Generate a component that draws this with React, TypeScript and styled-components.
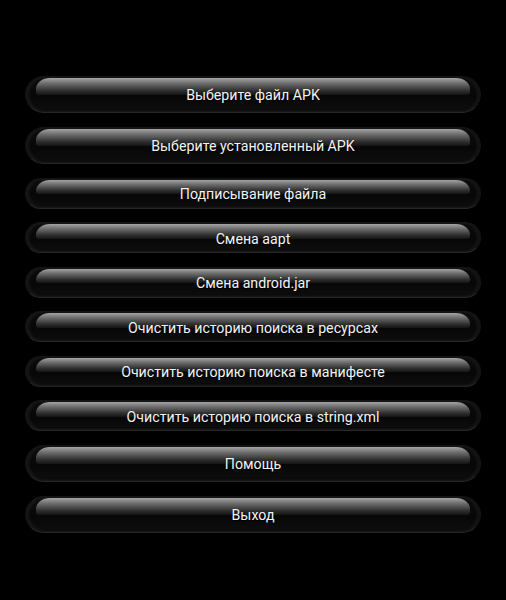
import React from 'react';
import styled, { createGlobalStyle } from 'styled-components';

const GlobalStyle = createGlobalStyle`
  html, body {
    margin: 0;
    padding: 0;
    background: #000;
  }
  body {
    font-family: Roboto, "Noto Sans", "Liberation Sans", sans-serif;
  }
`;

const Screen = styled.div`
  width: 506px;
  height: 600px;
  background: #000;
  box-sizing: border-box;
  padding: 75.5px 25px 0 25px;
`;

const Menu = styled.div`
  display: flex;
  flex-direction: column;
  gap: 13.5px;
`;

const MenuButton = styled.button<{ $size: 'large' | 'small' }>`
  position: relative;
  display: flex;
  align-items: center;
  justify-content: center;
  width: 100%;
  height: ${(p) => (p.$size === 'large' ? '37.5px' : '31px')};
  padding: 0 12px;
  box-sizing: border-box;
  border: 1px solid #141414;
  border-bottom-color: #262626;
  border-radius: 999px;
  background: linear-gradient(to bottom, #0d0d0d 0%, #070707 55%, #0e0e0e 100%);
  box-shadow: inset 3px 0 3px rgba(60, 60, 60, 0.3), inset -3px 0 3px rgba(60, 60, 60, 0.25);
  color: #f4f4f4;
  font-family: Roboto, "Noto Sans", "Liberation Sans", sans-serif;
  font-size: 14.2px;
  text-shadow: 0 1px 1px #000;
  cursor: pointer;
  overflow: hidden;

  &::before {
    content: '';
    position: absolute;
    left: 10px;
    right: 10px;
    top: 1px;
    height: 50%;
    border-radius: 14px 14px 3px 3px / 11px 11px 3px 3px;
    background: linear-gradient(to bottom, #a4a4a4 0%, #707070 30%, #2e2e2e 75%, #141414 100%);
  }
`;

const Label = styled.span`
  position: relative;
  padding-top: 2px;
`;

const items: { label: string; size: 'large' | 'small' }[] = [
  { label: 'Выберите файл APK', size: 'large' },
  { label: 'Выберите установленный APK', size: 'large' },
  { label: 'Подписывание файла', size: 'small' },
  { label: 'Смена aapt', size: 'small' },
  { label: 'Смена android.jar', size: 'small' },
  { label: 'Очистить историю поиска в ресурсах', size: 'small' },
  { label: 'Очистить историю поиска в манифесте', size: 'small' },
  { label: 'Очистить историю поиска в string.xml', size: 'small' },
  { label: 'Помощь', size: 'large' },
  { label: 'Выход', size: 'large' },
];

const App: React.FC = () => {
  return (
    <>
      <GlobalStyle />
      <Screen>
        <Menu>
          {items.map((item, index) => (
            <MenuButton key={index} $size={item.size}>
              <Label>{item.label}</Label>
            </MenuButton>
          ))}
        </Menu>
      </Screen>
    </>
  );
};

export default App;
